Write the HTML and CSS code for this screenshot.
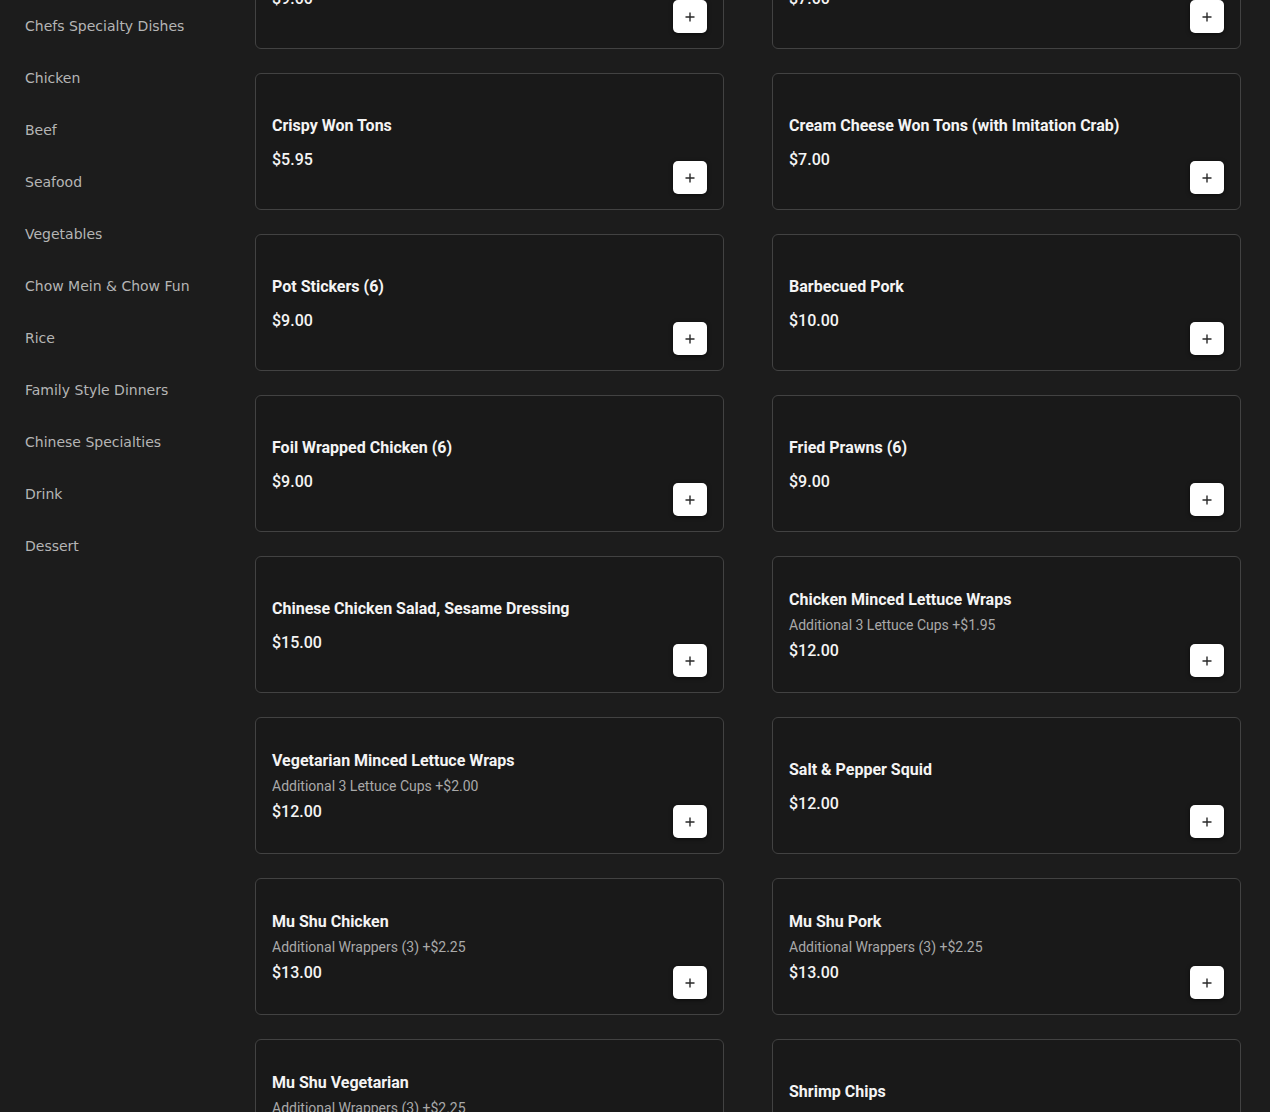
FILE: index.html
```html
<!DOCTYPE html>
<html lang="en">
<head>
<meta charset="utf-8">
<title>Menu</title>
<link rel="stylesheet" href="styles.css">
</head>
<body>
<div class="page">
  <nav class="sidebar">
    <a class="cat">Chefs Specialty Dishes</a>
    <a class="cat">Chicken</a>
    <a class="cat">Beef</a>
    <a class="cat">Seafood</a>
    <a class="cat">Vegetables</a>
    <a class="cat">Chow Mein &amp; Chow Fun</a>
    <a class="cat">Rice</a>
    <a class="cat">Family Style Dinners</a>
    <a class="cat">Chinese Specialties</a>
    <a class="cat">Drink</a>
    <a class="cat">Dessert</a>
  </nav>
  <main class="main">
    <div class="grid">
      <div class="card"><div class="info plain"><div class="title">Egg Rolls (4)</div><div class="price">$9.00</div></div><button class="add"><svg viewBox="0 0 12 12" width="12" height="12"><path d="M6 1.5v9M1.5 6h9" stroke="#2a2a2a" stroke-width="1.4"/></svg></button></div>
      <div class="card"><div class="info plain"><div class="title">Spring Rolls (4)</div><div class="price">$7.00</div></div><button class="add"><svg viewBox="0 0 12 12" width="12" height="12"><path d="M6 1.5v9M1.5 6h9" stroke="#2a2a2a" stroke-width="1.4"/></svg></button></div>

      <div class="card"><div class="info plain"><div class="title">Crispy Won Tons</div><div class="price">$5.95</div></div><button class="add"><svg viewBox="0 0 12 12" width="12" height="12"><path d="M6 1.5v9M1.5 6h9" stroke="#2a2a2a" stroke-width="1.4"/></svg></button></div>
      <div class="card"><div class="info plain"><div class="title">Cream Cheese Won Tons (with Imitation Crab)</div><div class="price">$7.00</div></div><button class="add"><svg viewBox="0 0 12 12" width="12" height="12"><path d="M6 1.5v9M1.5 6h9" stroke="#2a2a2a" stroke-width="1.4"/></svg></button></div>

      <div class="card"><div class="info plain"><div class="title">Pot Stickers (6)</div><div class="price">$9.00</div></div><button class="add"><svg viewBox="0 0 12 12" width="12" height="12"><path d="M6 1.5v9M1.5 6h9" stroke="#2a2a2a" stroke-width="1.4"/></svg></button></div>
      <div class="card"><div class="info plain"><div class="title">Barbecued Pork</div><div class="price">$10.00</div></div><button class="add"><svg viewBox="0 0 12 12" width="12" height="12"><path d="M6 1.5v9M1.5 6h9" stroke="#2a2a2a" stroke-width="1.4"/></svg></button></div>

      <div class="card"><div class="info plain"><div class="title">Foil Wrapped Chicken (6)</div><div class="price">$9.00</div></div><button class="add"><svg viewBox="0 0 12 12" width="12" height="12"><path d="M6 1.5v9M1.5 6h9" stroke="#2a2a2a" stroke-width="1.4"/></svg></button></div>
      <div class="card"><div class="info plain"><div class="title">Fried Prawns (6)</div><div class="price">$9.00</div></div><button class="add"><svg viewBox="0 0 12 12" width="12" height="12"><path d="M6 1.5v9M1.5 6h9" stroke="#2a2a2a" stroke-width="1.4"/></svg></button></div>

      <div class="card"><div class="info plain"><div class="title">Chinese Chicken Salad, Sesame Dressing</div><div class="price">$15.00</div></div><button class="add"><svg viewBox="0 0 12 12" width="12" height="12"><path d="M6 1.5v9M1.5 6h9" stroke="#2a2a2a" stroke-width="1.4"/></svg></button></div>
      <div class="card"><div class="info"><div class="title">Chicken Minced Lettuce Wraps</div><div class="desc">Additional 3 Lettuce Cups +$1.95</div><div class="price">$12.00</div></div><button class="add"><svg viewBox="0 0 12 12" width="12" height="12"><path d="M6 1.5v9M1.5 6h9" stroke="#2a2a2a" stroke-width="1.4"/></svg></button></div>

      <div class="card"><div class="info"><div class="title">Vegetarian Minced Lettuce Wraps</div><div class="desc">Additional 3 Lettuce Cups +$2.00</div><div class="price">$12.00</div></div><button class="add"><svg viewBox="0 0 12 12" width="12" height="12"><path d="M6 1.5v9M1.5 6h9" stroke="#2a2a2a" stroke-width="1.4"/></svg></button></div>
      <div class="card"><div class="info plain"><div class="title">Salt &amp; Pepper Squid</div><div class="price">$12.00</div></div><button class="add"><svg viewBox="0 0 12 12" width="12" height="12"><path d="M6 1.5v9M1.5 6h9" stroke="#2a2a2a" stroke-width="1.4"/></svg></button></div>

      <div class="card"><div class="info"><div class="title">Mu Shu Chicken</div><div class="desc">Additional Wrappers (3) +$2.25</div><div class="price">$13.00</div></div><button class="add"><svg viewBox="0 0 12 12" width="12" height="12"><path d="M6 1.5v9M1.5 6h9" stroke="#2a2a2a" stroke-width="1.4"/></svg></button></div>
      <div class="card"><div class="info"><div class="title">Mu Shu Pork</div><div class="desc">Additional Wrappers (3) +$2.25</div><div class="price">$13.00</div></div><button class="add"><svg viewBox="0 0 12 12" width="12" height="12"><path d="M6 1.5v9M1.5 6h9" stroke="#2a2a2a" stroke-width="1.4"/></svg></button></div>

      <div class="card"><div class="info"><div class="title">Mu Shu Vegetarian</div><div class="desc">Additional Wrappers (3) +$2.25</div><div class="price">$13.00</div></div><button class="add"><svg viewBox="0 0 12 12" width="12" height="12"><path d="M6 1.5v9M1.5 6h9" stroke="#2a2a2a" stroke-width="1.4"/></svg></button></div>
      <div class="card"><div class="info plain"><div class="title">Shrimp Chips</div><div class="price">$4.00</div></div><button class="add"><svg viewBox="0 0 12 12" width="12" height="12"><path d="M6 1.5v9M1.5 6h9" stroke="#2a2a2a" stroke-width="1.4"/></svg></button></div>
    </div>
  </main>
</div>
</body>
</html>
```
FILE: styles.css
```css
html, body {
  margin: 0;
  padding: 0;
  background: #1c1c1c;
  height: 1112px;
  overflow: hidden;
}

.page {
  display: flex;
  align-items: flex-start;
}

.sidebar {
  width: 255px;
  flex: none;
  display: flex;
  flex-direction: column;
  box-sizing: border-box;
  padding-left: 25px;
}

.cat {
  display: block;
  font-family: "DejaVu Sans", sans-serif;
  font-size: 14px;
  line-height: 20px;
  color: #b5b5b5;
  padding: 16px 0;
}

.main {
  flex: 1;
}

.grid {
  display: grid;
  grid-template-columns: 469px 469px;
  column-gap: 48px;
  row-gap: 24px;
  margin-top: -88px;
}

.card {
  box-sizing: border-box;
  height: 137px;
  background: #191919;
  border: 1px solid #424242;
  border-radius: 6px;
  padding: 16px 16px 15px 16px;
  display: flex;
  align-items: flex-end;
  font-family: Roboto, "Liberation Sans", sans-serif;
}

.info {
  flex: 1;
  align-self: center;
  display: flex;
  flex-direction: column;
}

.info.plain {
  padding-top: 2px;
}

.title {
  font-size: 16px;
  font-weight: 700;
  line-height: 24px;
  color: #f4f4f4;
}

.desc {
  font-size: 14px;
  line-height: 20px;
  color: #a9a9a9;
  margin: 3px 0 4px;
}

.title + .price {
  margin-top: 10px;
}

.price {
  font-size: 16px;
  font-weight: 500;
  line-height: 24px;
  color: #f4f4f4;
}

.add {
  flex: none;
  width: 34px;
  height: 33px;
  border: none;
  border-radius: 5px;
  background: #ffffff;
  box-shadow: 0 1px 4px rgba(0, 0, 0, 0.6);
  display: flex;
  align-items: center;
  justify-content: center;
  padding: 0;
}
```
